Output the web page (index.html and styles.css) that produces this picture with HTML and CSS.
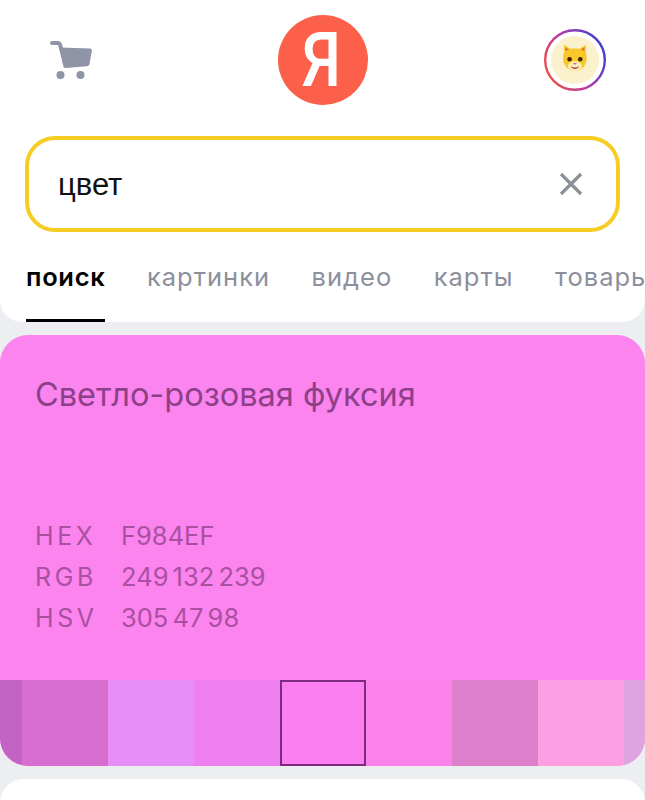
FILE: index.html
```html
<!DOCTYPE html>
<html lang="ru">
  <head>
    <meta charset="UTF-8" />
    <title>цвет</title>
    <link rel="stylesheet" href="styles.css">
  </head>
  <body>
    <header class="header">
      <div class="top">
        <svg class="cart" width="44" height="40" viewBox="0 0 44 40">
          <path d="M2 3h5.500c1.500 0 2.300.7 2.700 2.200L15 24" fill="none" stroke="#8f94a6" stroke-width="4" stroke-linecap="round"/>
          <path d="M10 7.500 40 8.500c1.500 0 2 1 1.800 2.500L39.500 24c-.3 1.500-1 2-2.500 2.200L16 28c-1.500 0-2.300-.6-2.700-2z" fill="#8f94a6"/>
          <circle cx="10.500" cy="35" r="4" fill="#8f94a6"/>
          <circle cx="30.500" cy="35" r="4" fill="#8f94a6"/>
        </svg>
        <div class="logo"><span class="logo-letter">Я</span></div>
        <svg class="avatar" width="62" height="62" viewBox="0 0 62 62">
          <defs>
            <linearGradient id="ring" x1="0" y1="0.800" x2="1" y2="0.300">
              <stop offset="0" stop-color="#f0523f"/>
              <stop offset="0.500" stop-color="#b53aa8"/>
              <stop offset="1" stop-color="#3f3fd0"/>
            </linearGradient>
          </defs>
          <circle cx="31" cy="31" r="29.800" fill="#fff" stroke="url(#ring)" stroke-width="2.400"/>
          <circle cx="31" cy="31" r="24" fill="#fbf1cc"/>
          <g transform="translate(5.500 6) scale(.82)">
            <path d="M18 21l-.5-9 8.500 5c3-.8 7-.8 10 0l8.500-5-.5 9c2 4 2 11-1 16-2.500 5-7.500 7-12 7s-9.500-2-12-7c-3-5-3-12-1-16z" fill="#f9c72a"/>
            <path d="M19.500 19.500l-.3-4.500 4.300 2.700zM42.500 19.500l.3-4.500-4.300 2.700z" fill="#d4742a"/>
            <ellipse cx="31" cy="38" rx="8.500" ry="6" fill="#fdeeb8"/>
            <circle cx="24.500" cy="29.500" r="2.800" fill="#3a2410"/>
            <circle cx="37.500" cy="29.500" r="2.800" fill="#3a2410"/>
            <path d="M28.500 34h5l-2.500 2.500z" fill="#e0607a"/>
            <path d="M26 38c2.500 2 7.500 2 10 0-1 4.500-9 4.500-10 0z" fill="#a8383c"/>
          </g>
        </svg>
      </div>
      <div class="search">
        <span class="query">цвет</span>
        <svg class="clear" width="24" height="24" viewBox="0 0 24 24">
          <path d="M2 2l20 20M22 2L2 22" stroke="#8a8f98" stroke-width="3.200" fill="none"/>
        </svg>
      </div>
      <nav class="tabs">
        <a class="tab active">поиск</a>
        <a class="tab">картинки</a>
        <a class="tab">видео</a>
        <a class="tab">карты</a>
        <a class="tab">товары</a>
      </nav>
    </header>

    <section class="color-card">
      <h2 class="color-name">Светло-розовая фуксия</h2>
      <dl class="codes">
        <dt>HEX</dt><dd>F984EF</dd>
        <dt>RGB</dt><dd>249 132 239</dd>
        <dt>HSV</dt><dd>305 47 98</dd>
      </dl>
      <div class="swatches">
        <div class="swatch s1"></div>
        <div class="swatch s2"></div>
        <div class="swatch s3"></div>
        <div class="swatch s4"></div>
        <div class="swatch s5 current"></div>
        <div class="swatch s6"></div>
        <div class="swatch s7"></div>
        <div class="swatch s8"></div>
        <div class="swatch s9"></div>
      </div>
    </section>

    <section class="next-card"></section>
  </body>
</html>
```

FILE: styles.css
```css
html, body {
  margin: 0;
  height: 800px;
  overflow: hidden;
}
body {
  font-family: Inter, "Liberation Sans", sans-serif;
  background: #eceef1;
}
.header {
  background: #fff;
  height: 322px;
  box-sizing: border-box;
  padding-top: 15px;
  border-radius: 0 0 22px 22px;
  overflow: hidden;
}
.top {
  display: grid;
  grid-template-columns: 1fr auto 1fr;
  align-items: center;
  padding: 0 39px;
  height: 90px;
}
.cart {
  justify-self: start;
  margin: 0 0 1px 11px;
}
.avatar {
  justify-self: end;
}
.logo {
  width: 90px;
  height: 90px;
  border-radius: 50%;
  background: #fc5f4a;
  color: #fff;
  font-family: Roboto, sans-serif;
  font-size: 76px;
  font-weight: 500;
  line-height: 90px;
  text-align: center;
}
.logo-letter {
  display: inline-block;
  transform: translateX(-1px) scaleX(.84);
}
.search {
  display: flex;
  align-items: center;
  justify-content: space-between;
  box-sizing: border-box;
  height: 96px;
  margin: 31px 25px 0 25px;
  padding: 0 33px 0 29px;
  border: 4px solid #f5cd25;
  border-radius: 30px;
}
.query {
  padding-top: 2px;
  font-family: "Liberation Sans", sans-serif;
  font-size: 31px;
  color: #111;
}
.tabs {
  display: flex;
  gap: 41.500px;
  padding-left: 26px;
  margin-top: 26px;
  white-space: nowrap;
}
.tab {
  display: block;
  height: 65px;
  box-sizing: border-box;
  padding-top: 3px;
  font-size: 25.500px;
  letter-spacing: 1px;
  color: #8c8f9c;
}
.tab.active {
  color: #000;
  font-weight: 600;
  letter-spacing: .7px;
  border-bottom: 4px solid #000;
}
.color-card {
  margin-top: 13px;
  height: 431px;
  background: #fb84ef;
  border-radius: 28px;
  overflow: hidden;
  display: flex;
  flex-direction: column;
}
.color-name {
  margin: 40px 0 0 35px;
  font-size: 32.500px;
  font-weight: 400;
  color: #8b4088;
}
.codes {
  display: grid;
  grid-template-columns: 86px auto;
  grid-auto-rows: 41px;
  align-items: center;
  margin: 101px 0 0 35px;
  font-size: 25px;
  color: #a9509f;
}
.codes dt {
  letter-spacing: 3.600px;
}
.codes dd {
  margin: 0;
  font-size: 25.500px;
  word-spacing: -3px;
}
.swatches {
  margin-top: auto;
  height: 86px;
  display: flex;
  justify-content: center;
}
.swatch {
  flex: 0 0 86px;
  box-sizing: border-box;
}
.s1 { background: #c364c4; }
.s2 { background: #d86fd0; }
.s3 { background: #e88ef8; }
.s4 { background: #ee80ef; }
.s5 { background: #fb7ff0; }
.s6 { background: #fb82e8; }
.s7 { background: #dd7fcb; }
.s8 { background: #fd9fe2; }
.s9 { background: #dfa3df; }
.swatch.current {
  border: 2px solid #7d2a80;
}
.next-card {
  margin-top: 13px;
  height: 60px;
  background: #fff;
  border-radius: 24px;
}
```
